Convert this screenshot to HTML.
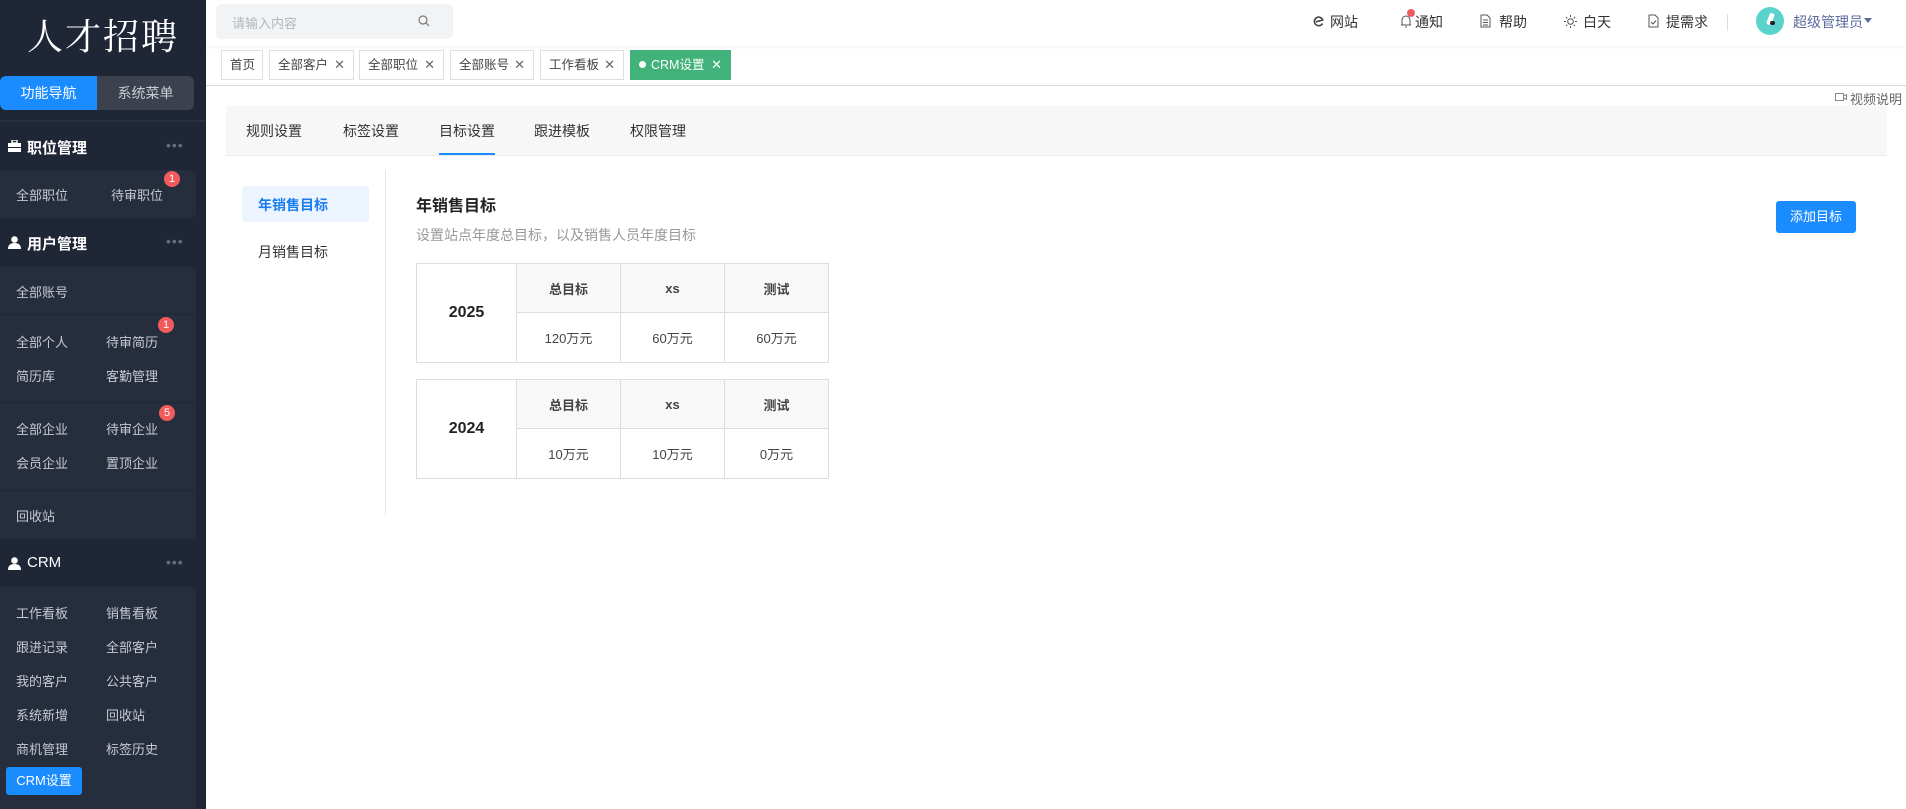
<!DOCTYPE html>
<html><head><meta charset="utf-8">
<style>
*{margin:0;padding:0;box-sizing:border-box}
html,body{width:1906px;height:809px;overflow:hidden}
body{position:relative;background:#fff;font-family:"Liberation Sans","Noto Sans CJK SC",sans-serif;color:#333;font-size:13px}
.a{position:absolute;white-space:nowrap}
#side{position:absolute;left:0;top:0;width:206px;height:809px;background:#1f2636;overflow:hidden}
.logo{left:27px;top:9px;font-family:"Noto Serif CJK SC",serif;font-size:36px;color:#fff;letter-spacing:2px}
.navt{top:76px;height:34px;line-height:34px;text-align:center;font-size:14px}
.sh{font-size:15px;color:#fff;font-weight:bold;left:27px}
.dots{left:166px;color:#666e7c;font-size:14px;letter-spacing:1px}
.box{position:absolute;left:0;width:196px;background:#262e3e;border-radius:0 6px 6px 0}
.it{color:#c5c9d0;font-size:13px}
.badge{position:absolute;width:16px;height:16px;border-radius:8px;background:#f25b5b;color:#fff;font-size:11px;text-align:center;line-height:16px}
.sep{position:absolute;left:0;width:196px;height:1px;background:#1f2636}
.tag{position:absolute;top:50px;height:30px;border:1px solid #dcdfe6;line-height:28px;font-size:12.5px;color:#444;padding-left:8px}
.tag i{font-style:normal;color:#666;position:absolute;right:8px;top:0;font-size:13px}
.hd{color:#333;font-size:14px;top:12px}
td{border:1px solid #dcdde3;text-align:center;font-size:13px;color:#444}
table{position:absolute;left:416px;width:412px;border-collapse:collapse;table-layout:fixed}
.tb{font-size:14px;color:#333;top:121px}
</style></head><body>
<div id="side">
<div class="a logo">人才招聘</div>
<div class="a navt" style="left:0;width:97px;background:#1a8cff;color:#fff;border-radius:6px 0 0 6px">功能导航</div>
<div class="a navt" style="left:97px;width:97px;background:#3b414d;color:#c9ccd2;border-radius:0 6px 6px 0">系统菜单</div>
<div class="a" style="left:0;top:120px;width:206px;height:2px;background:#283042"></div>

<svg class="a" style="left:8px;top:140px" width="13" height="12" viewBox="0 0 13 12"><rect x="4" y="0" width="5" height="3" fill="none" stroke="#fff" stroke-width="1.4"/><rect x="0" y="3" width="13" height="4" fill="#fff"/><rect x="0" y="8" width="13" height="4" fill="#fff"/></svg>
<div class="a sh" style="top:137px">职位管理</div><div class="a dots" style="top:137px">•••</div>
<div class="box" style="top:170px;height:48px"></div>
<div class="a it" style="left:16px;top:185px">全部职位</div><div class="a it" style="left:111px;top:185px">待审职位</div>
<div class="badge" style="left:164px;top:171px">1</div>

<svg class="a" style="left:8px;top:236px" width="13" height="13" viewBox="0 0 13 13"><circle cx="6.5" cy="3.5" r="3.3" fill="#fff"/><path d="M0 13 Q0 7 6.5 7 Q13 7 13 13Z" fill="#fff"/></svg>
<div class="a sh" style="top:233px">用户管理</div><div class="a dots" style="top:233px">•••</div>
<div class="box" style="top:266px;height:273px"></div>
<div class="a it" style="left:16px;top:282px">全部账号</div>
<div class="sep" style="top:314px"></div>
<div class="a it" style="left:16px;top:332px">全部个人</div><div class="a it" style="left:106px;top:332px">待审简历</div>
<div class="badge" style="left:158px;top:317px">1</div>
<div class="a it" style="left:16px;top:366px">简历库</div><div class="a it" style="left:106px;top:366px">客勤管理</div>
<div class="sep" style="top:402px"></div>
<div class="a it" style="left:16px;top:419px">全部企业</div><div class="a it" style="left:106px;top:419px">待审企业</div>
<div class="badge" style="left:159px;top:405px">5</div>
<div class="a it" style="left:16px;top:453px">会员企业</div><div class="a it" style="left:106px;top:453px">置顶企业</div>
<div class="sep" style="top:490px"></div>
<div class="a it" style="left:16px;top:506px">回收站</div>

<svg class="a" style="left:8px;top:557px" width="13" height="13" viewBox="0 0 13 13"><circle cx="6.5" cy="3.5" r="3.3" fill="#fff"/><path d="M0 13 Q0 7 6.5 7 Q13 7 13 13Z" fill="#fff"/></svg>
<div class="a sh" style="top:554px;font-weight:normal">CRM</div><div class="a dots" style="top:554px">•••</div>
<div class="box" style="top:587px;height:222px;border-radius:0 6px 0 0"></div>
<div class="a it" style="left:16px;top:603px">工作看板</div><div class="a it" style="left:106px;top:603px">销售看板</div>
<div class="a it" style="left:16px;top:637px">跟进记录</div><div class="a it" style="left:106px;top:637px">全部客户</div>
<div class="a it" style="left:16px;top:671px">我的客户</div><div class="a it" style="left:106px;top:671px">公共客户</div>
<div class="a it" style="left:16px;top:705px">系统新增</div><div class="a it" style="left:106px;top:705px">回收站</div>
<div class="a it" style="left:16px;top:739px">商机管理</div><div class="a it" style="left:106px;top:739px">标签历史</div>
<div class="a" style="left:6px;top:767px;width:76px;height:28px;background:#1a8cff;border-radius:3px;color:#fff;font-size:13px;line-height:28px;text-align:center">CRM设置</div>
</div>

<!-- header -->
<div class="a" style="left:206px;top:0;width:1700px;height:46px;box-shadow:0 1px 4px rgba(0,0,0,.06)"></div>
<div class="a" style="left:216px;top:4px;width:237px;height:35px;background:#f2f3f5;border-radius:6px"></div>
<div class="a" style="left:232px;top:13px;color:#b3b6bc;font-size:13px">请输入内容</div>
<svg class="a" style="left:418px;top:15px" width="12" height="12" viewBox="0 0 12 12"><circle cx="5" cy="5" r="4" fill="none" stroke="#777" stroke-width="1.2"/><path d="M8 8 L11 11" stroke="#777" stroke-width="1.2"/></svg>

<svg class="a" style="left:1313px;top:16px" width="11" height="11" viewBox="0 0 11 11"><path d="M9.5 7.5 A4.3 4.3 0 1 1 9.8 4 L3 5.8" fill="none" stroke="#444" stroke-width="1.6"/></svg>
<div class="a hd" style="left:1330px">网站</div>
<svg class="a" style="left:1400px;top:13px" width="12" height="16" viewBox="0 0 12 16"><path d="M2 12 V7 A4 4 0 0 1 10 7 V12 H1 H11 M5 14 H7" fill="none" stroke="#555" stroke-width="1"/></svg>
<div class="a" style="left:1407px;top:9px;width:8px;height:8px;border-radius:4px;background:#f25b5b"></div>
<div class="a hd" style="left:1415px">通知</div>
<svg class="a" style="left:1480px;top:14px" width="11" height="14" viewBox="0 0 11 14"><path d="M1 1 H7 L10 4 V13 H1Z M3 6 H8 M3 8.5 H8 M3 11 H8" fill="none" stroke="#555" stroke-width="1"/></svg>
<div class="a hd" style="left:1499px">帮助</div>
<svg class="a" style="left:1564px;top:15px" width="13" height="13" viewBox="0 0 13 13"><circle cx="6.5" cy="6.5" r="2.8" fill="none" stroke="#555" stroke-width="1"/><path d="M6.5 0V2M6.5 11V13M0 6.5H2M11 6.5H13M2 2L3.3 3.3M9.7 9.7L11 11M2 11L3.3 9.7M9.7 3.3L11 2" stroke="#555" stroke-width="1"/></svg>
<div class="a hd" style="left:1583px">白天</div>
<svg class="a" style="left:1648px;top:14px" width="11" height="14" viewBox="0 0 11 14"><path d="M1 1 H7 L10 4 V13 H1Z M3 8 L5 10 L8 6.5" fill="none" stroke="#555" stroke-width="1"/></svg>
<div class="a hd" style="left:1666px">提需求</div>
<div class="a" style="left:1727px;top:14px;width:1px;height:17px;background:#ddd"></div>
<div class="a" style="left:1756px;top:7px;width:28px;height:28px;border-radius:14px;background:#5bd3cc"></div>
<div class="a" style="left:1768px;top:13px;width:5px;height:12px;background:#fff;border-radius:2px;transform:rotate(20deg)"></div>
<div class="a" style="left:1770px;top:21px;width:5px;height:4px;background:#222;border-radius:2px"></div>
<div class="a hd" style="left:1793px;color:#5b6ba0">超级管理员</div>
<div class="a" style="left:1864px;top:18px;border-left:4px solid transparent;border-right:4px solid transparent;border-top:5px solid #5b6ba0"></div>

<!-- tags -->
<div class="tag" style="left:221px;width:42px">首页</div>
<div class="tag" style="left:269px;width:85px">全部客户<i>✕</i></div>
<div class="tag" style="left:359px;width:85px">全部职位<i>✕</i></div>
<div class="tag" style="left:450px;width:84px">全部账号<i>✕</i></div>
<div class="tag" style="left:540px;width:84px">工作看板<i>✕</i></div>
<div class="tag" style="left:630px;width:101px;background:#41b37a;border-color:#41b37a;color:#fff"><span style="display:inline-block;width:7px;height:7px;border-radius:4px;background:#fff;margin-right:5px;vertical-align:1px"></span>CRM设置<i style="color:#fff">✕</i></div>
<div class="a" style="left:206px;top:85px;width:1700px;height:1px;background:#d8dae2"></div>

<svg class="a" style="left:1835px;top:92px" width="12" height="10" viewBox="0 0 12 10"><rect x="0.5" y="1.5" width="8" height="7" fill="none" stroke="#888"/><path d="M8.5 4 L11.5 2.5 V7.5 L8.5 6" fill="none" stroke="#888"/></svg>
<div class="a" style="left:1850px;top:89px;font-size:13px;color:#666">视频说明</div>

<!-- tabs -->
<div class="a" style="left:226px;top:106px;width:1661px;height:50px;background:#f7f7f7;border-bottom:1px solid #ebebf0"></div>
<div class="a tb" style="left:246px">规则设置</div>
<div class="a tb" style="left:343px">标签设置</div>
<div class="a tb" style="left:439px">目标设置</div>
<div class="a tb" style="left:534px">跟进模板</div>
<div class="a tb" style="left:630px">权限管理</div>
<div class="a" style="left:439px;top:153px;width:56px;height:2px;background:#1a8cff"></div>

<!-- left menu -->
<div class="a" style="left:242px;top:186px;width:127px;height:36px;background:#ecf5ff;border-radius:3px"></div>
<div class="a" style="left:258px;top:195px;color:#1a7cf0;font-weight:bold;font-size:14px">年销售目标</div>
<div class="a" style="left:258px;top:242px;color:#333;font-size:14px">月销售目标</div>
<div class="a" style="left:385px;top:170px;width:1px;height:345px;background:#e6e6ea"></div>

<div class="a" style="left:416px;top:192px;font-size:16px;font-weight:bold;color:#222">年销售目标</div>
<div class="a" style="left:416px;top:225px;font-size:14px;color:#999">设置站点年度总目标，以及销售人员年度目标</div>
<div class="a" style="left:1776px;top:201px;width:80px;height:32px;background:#1a8cff;border-radius:3px;color:#fff;font-size:13px;text-align:center;line-height:32px">添加目标</div>

<table style="top:263px">
<colgroup><col style="width:100px"><col style="width:104px"><col style="width:104px"><col style="width:104px"></colgroup>
<tr style="height:49px;background:#f8f8f8"><td rowspan="2" style="background:#fff;font-size:16px;font-weight:bold;color:#222">2025</td><td style="font-weight:bold">总目标</td><td style="font-weight:bold">xs</td><td style="font-weight:bold">测试</td></tr>
<tr style="height:50px"><td>120万元</td><td>60万元</td><td>60万元</td></tr>
</table>
<table style="top:379px">
<colgroup><col style="width:100px"><col style="width:104px"><col style="width:104px"><col style="width:104px"></colgroup>
<tr style="height:49px;background:#f8f8f8"><td rowspan="2" style="background:#fff;font-size:16px;font-weight:bold;color:#222">2024</td><td style="font-weight:bold">总目标</td><td style="font-weight:bold">xs</td><td style="font-weight:bold">测试</td></tr>
<tr style="height:50px"><td>10万元</td><td>10万元</td><td>0万元</td></tr>
</table>
</body></html>
